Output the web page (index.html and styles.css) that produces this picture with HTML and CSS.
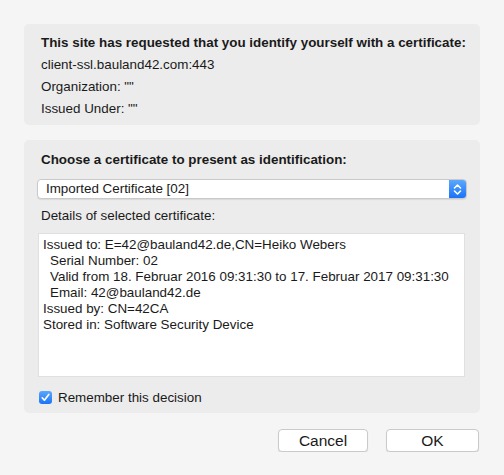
FILE: index.html
```html
<!DOCTYPE html>
<html lang="en">
<head>
    <meta charset="UTF-8">
    <title>User Identification Request</title>
    <link rel="stylesheet" href="styles.css">
</head>
<body>
    <div class="dialog">
        <div class="panel request">
            <div class="title">This site has requested that you identify yourself with a certificate:</div>
            <div class="line">client-ssl.bauland42.com:443</div>
            <div class="line">Organization: ""</div>
            <div class="line">Issued Under: ""</div>
        </div>

        <div class="panel choose">
            <div class="title">Choose a certificate to present as identification:</div>
            <div class="select">
                <span class="select-text">Imported Certificate [02]</span>
                <span class="select-arrows">
                    <svg width="9" height="13" viewBox="0 0 9 13">
                        <path d="M1.5 5 L4.5 2 L7.5 5 M1.5 8 L4.5 11 L7.5 8" fill="none" stroke="#fff" stroke-width="1.6" stroke-linecap="round" stroke-linejoin="round"/>
                    </svg>
                </span>
            </div>
            <div class="label">Details of selected certificate:</div>
            <div class="details">
                <div>Issued to: E=42@bauland42.de,CN=Heiko Webers</div>
                <div class="sub">Serial Number: 02</div>
                <div class="sub">Valid from 18. Februar 2016 09:31:30 to 17. Februar 2017 09:31:30</div>
                <div class="sub">Email: 42@bauland42.de</div>
                <div>Issued by: CN=42CA</div>
                <div>Stored in: Software Security Device</div>
            </div>
            <label class="remember">
                <span class="checkbox">
                    <svg width="13" height="13" viewBox="0 0 13 13">
                        <path d="M3.2 6.8 L5.4 9.2 L9.8 3.4" fill="none" stroke="#fff" stroke-width="1.7" stroke-linecap="round" stroke-linejoin="round"/>
                    </svg>
                </span>
                Remember this decision
            </label>
        </div>

        <div class="buttons">
            <button class="btn cancel">Cancel</button>
            <button class="btn ok">OK</button>
        </div>
    </div>
</body>
</html>
```

FILE: styles.css
```css
* {
    margin: 0;
    padding: 0;
    box-sizing: border-box;
}

body {
    font-family: "Liberation Sans", Arial, sans-serif;
    font-size: 13.4px;
    color: #1a1a1a;
    background-color: #f5f5f5;
}

.dialog {
    padding: 24px 24px 0 24px;
}

.panel {
    background-color: #ececec;
    border-radius: 5px;
}

.request {
    padding: 8px 10px 5px 17px;
}

.request .line,
.request .title {
    line-height: 22px;
}

.title {
    font-weight: bold;
    white-space: nowrap;
}

.choose {
    margin-top: 15px;
    padding: 9px 13px 6px 13px;
}

.choose .title {
    line-height: 22px;
    padding-left: 4px;
}

.select {
    display: flex;
    align-items: center;
    height: 20px;
    margin-top: 8px;
    background-color: #fff;
    border: 1px solid #c9c9c9;
    border-radius: 4px;
    box-shadow: 0 1px 1px rgba(0, 0, 0, 0.08);
    overflow: hidden;
}

.select-text {
    flex: 1;
    padding-left: 8px;
    line-height: 18px;
}

.select-arrows {
    display: flex;
    align-items: center;
    justify-content: center;
    width: 17px;
    height: 100%;
    background: linear-gradient(#5ba8fd, #1b73f6);
}

.label {
    line-height: 22px;
    margin-top: 6px;
    padding-left: 4px;
}

.details {
    height: 144px;
    margin: 6px 2px 0 1px;
    padding: 3px 4px;
    background-color: #fff;
    border: 1px solid #e0e0e0;
    line-height: 16px;
    white-space: nowrap;
}

.details .sub {
    padding-left: 7px;
}

.remember {
    display: flex;
    align-items: center;
    gap: 6px;
    height: 20px;
    margin-top: 10px;
    padding-left: 2px;
}

.checkbox {
    display: flex;
    width: 13px;
    height: 13px;
    border-radius: 3px;
    background: linear-gradient(#5ba8fd, #1b73f6);
}

.buttons {
    display: flex;
    justify-content: flex-end;
    gap: 18px;
    margin-top: 16px;
    padding-right: 1px;
}

.btn {
    height: 23px;
    font-family: "Liberation Sans", Arial, sans-serif;
    font-size: 15.5px;
    color: #1a1a1a;
    background-color: #fff;
    border: 1px solid #cacaca;
    border-radius: 4px;
    box-shadow: 0 1px 1px rgba(0, 0, 0, 0.1);
}

.cancel {
    width: 90px;
}

.ok {
    width: 93px;
}
```
